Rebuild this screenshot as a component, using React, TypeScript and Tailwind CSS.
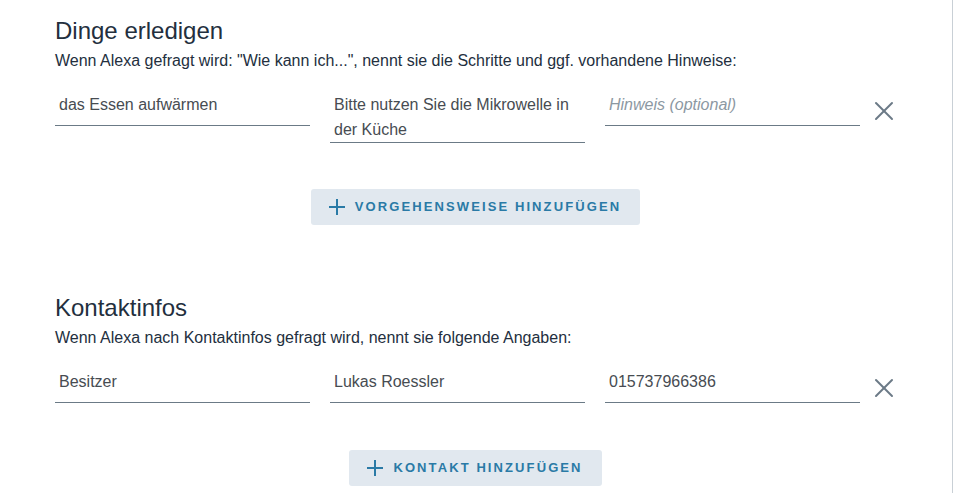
import { X } from "lucide-react";

type Field = { value: string; placeholder?: boolean };

const sections: {
  title: string;
  description: string;
  rows: Field[][];
  button: string;
}[] = [
  {
    title: "Dinge erledigen",
    description:
      'Wenn Alexa gefragt wird: "Wie kann ich...", nennt sie die Schritte und ggf. vorhandene Hinweise:',
    rows: [
      [
        { value: "das Essen aufwärmen" },
        { value: "Bitte nutzen Sie die Mikrowelle in der Küche" },
        { value: "Hinweis (optional)", placeholder: true },
      ],
    ],
    button: "Vorgehensweise hinzufügen",
  },
  {
    title: "Kontaktinfos",
    description: "Wenn Alexa nach Kontaktinfos gefragt wird, nennt sie folgende Angaben:",
    rows: [[{ value: "Besitzer" }, { value: "Lukas Roessler" }, { value: "015737966386" }]],
    button: "Kontakt hinzufügen",
  },
];

function InputField({ field }: { field: Field }) {
  return (
    <div
      className={`min-h-[34px] border-b border-[#6b7a86] px-[4px] text-[16px] leading-[25px] ${
        field.placeholder ? "italic text-[#8c98a2]" : "text-[#474c52]"
      }`}
    >
      {field.value}
    </div>
  );
}

export default function App() {
  return (
    <div className="min-h-[493px] w-full bg-white font-['Liberation_Sans',Arial,sans-serif]">
      <div className="min-h-[493px] border-r border-[#c9d0d6]">
        <div className="ml-[55px] w-[841px] pt-[16px]">
          {sections.map((section, si) => (
            <section key={section.title} className={si > 0 ? "mt-[68px]" : ""}>
              <h2 className="text-[24px] leading-[30px] text-[#232f3e]">{section.title}</h2>
              <p className="mt-[4px] text-[16px] leading-[22px] text-[#232f3e]">
                {section.description}
              </p>

              {section.rows.map((row, ri) => (
                <div key={ri} className="mt-[20px] flex items-start">
                  <div className="grid w-[805px] grid-cols-3 items-start gap-x-[20px]">
                    {row.map((field, fi) => (
                      <InputField key={fi} field={field} />
                    ))}
                  </div>
                  <button className="-mr-[4px] ml-[8px] mt-[3px] flex h-[32px] w-[32px] items-center justify-center text-[#6b7a86]">
                    <X size={32} strokeWidth={1.5} />
                  </button>
                </div>
              ))}

              <div className="mt-[46px] flex justify-center">
                <button className="flex h-[36px] items-center gap-[10px] rounded-[3px] bg-[#e1e8ef] pl-[18px] pr-[19px] text-[13px] font-bold uppercase tracking-[2.1px] text-[#2a7aa6]">
                  <svg width="16" height="16" viewBox="0 0 16 16" fill="none" stroke="currentColor" strokeWidth="2">
                    <path d="M8 0v16M0 8h16" />
                  </svg>
                  {section.button}
                </button>
              </div>
            </section>
          ))}
        </div>
      </div>
    </div>
  );
}
